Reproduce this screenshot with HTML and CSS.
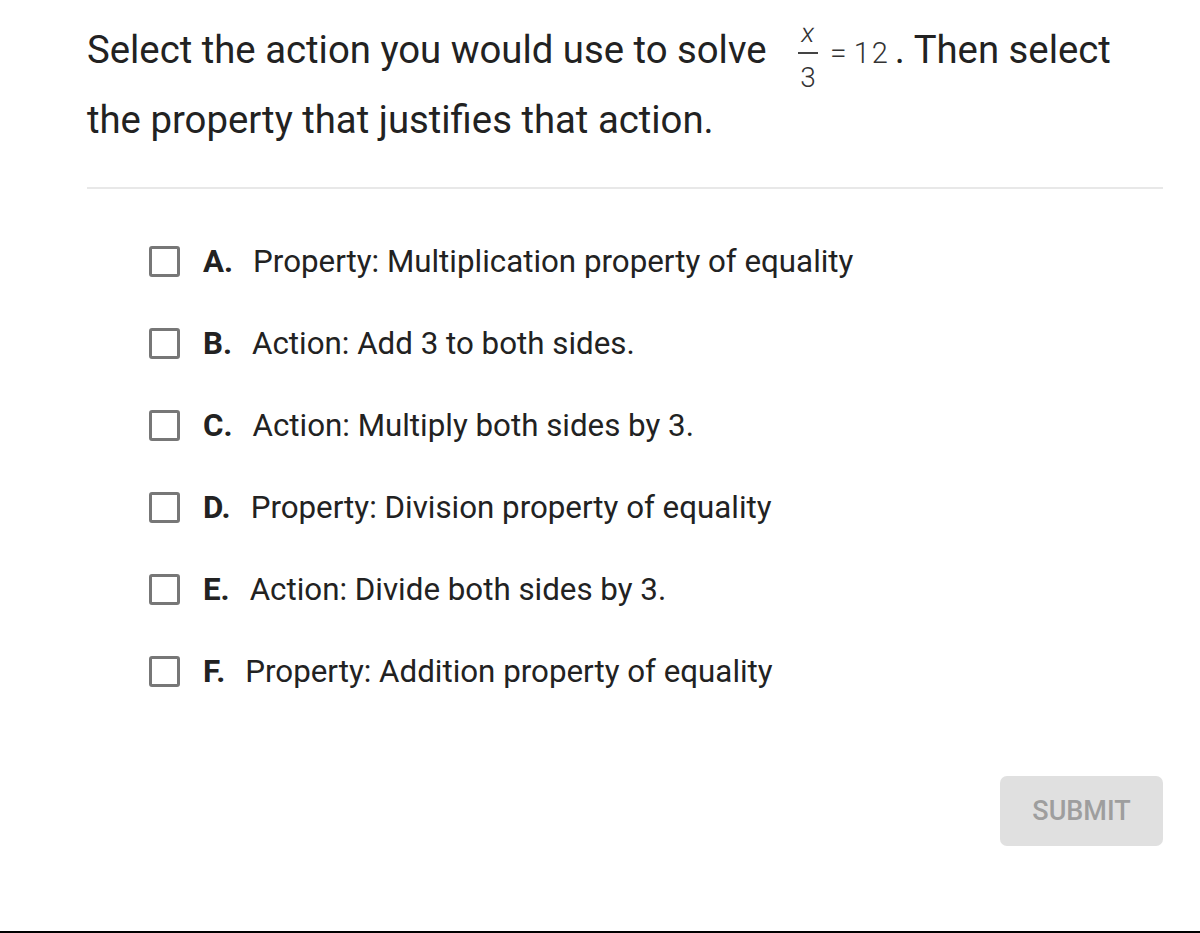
FILE: index.html
```html
<!DOCTYPE html>
<html>
<head>
<meta charset="utf-8">
<link rel="stylesheet" href="styles.css">
</head>
<body>
<div class="page">
  <div class="question">
    Select the action you would use to solve <span class="math"><span class="frac"><span class="num">x</span><span class="bar"></span><span class="den">3</span></span><span class="eq">=</span><span class="rhs">12</span></span>. Then select the property that justifies that action.
  </div>
  <hr class="divider">
  <ul class="options">
    <li class="option"><span class="box"></span><span class="letter">A.</span><span class="text">Property: Multiplication property of equality</span></li>
    <li class="option"><span class="box"></span><span class="letter">B.</span><span class="text">Action: Add 3 to both sides.</span></li>
    <li class="option"><span class="box"></span><span class="letter">C.</span><span class="text">Action: Multiply both sides by 3.</span></li>
    <li class="option"><span class="box"></span><span class="letter">D.</span><span class="text">Property: Division property of equality</span></li>
    <li class="option"><span class="box"></span><span class="letter">E.</span><span class="text">Action: Divide both sides by 3.</span></li>
    <li class="option"><span class="box"></span><span class="letter">F.</span><span class="text">Property: Addition property of equality</span></li>
  </ul>
  <div class="actions">
    <button class="submit">SUBMIT</button>
  </div>
</div>
<div class="bottom-line"></div>
</body>
</html>
```
FILE: styles.css
```css
html, body {
  margin: 0;
  padding: 0;
  background: #fff;
}
body {
  font-family: Roboto, "Liberation Sans", sans-serif;
  color: #222;
  width: 1200px;
  height: 933px;
  display: flex;
  flex-direction: column;
}
.page {
  flex: 1;
  padding: 15px 37px 0 87px;
}
.question {
  font-size: 38.3px;
  line-height: 70px;
  color: #222;
}
.math {
  display: inline-flex;
  align-items: center;
  vertical-align: middle;
  color: #333;
  font-weight: 300;
  margin: -12px 0;
}
.frac {
  display: inline-flex;
  flex-direction: column;
  align-items: center;
  width: 20px;
  margin-left: 22px;
}
.num {
  font-size: 27px;
  line-height: 24px;
  padding: 5px 0 7px;
  transform: skewX(-8deg);
}
.bar {
  width: 20px;
  height: 2px;
  background: #444;
}
.den {
  font-size: 28px;
  line-height: 24px;
  padding-top: 12px;
}
.eq {
  margin: 0 7px 0 12px;
  font-size: 30px;
  line-height: 24px;
}
.rhs {
  font-size: 29px;
  line-height: 24px;
  letter-spacing: 2px;
  margin-right: 5px;
}
.divider {
  border: 0;
  height: 2px;
  background: #e8e8e8;
  margin: 32px 0 0;
}
.options {
  list-style: none;
  margin: 0;
  padding: 55px 0 0 62px;
  display: flex;
  flex-direction: column;
  gap: 47px;
}
.option {
  display: flex;
  align-items: center;
  font-size: 31.3px;
  line-height: 35px;
}
.box {
  width: 25px;
  height: 25px;
  border: 3px solid #777;
  border-radius: 3px;
  margin-right: 23px;
  flex: none;
}
.letter {
  font-weight: 700;
  margin-right: 20px;
}
.actions {
  display: flex;
  justify-content: flex-end;
  margin-top: 87px;
}
.submit {
  width: 163px;
  height: 70px;
  border: 0;
  border-radius: 7px;
  background: #e0e0e0;
  color: #9e9e9e;
  font-family: Roboto, "Liberation Sans", sans-serif;
  font-size: 27px;
  font-weight: 500;
}
.bottom-line {
  height: 2px;
  background: #000;
}
```
